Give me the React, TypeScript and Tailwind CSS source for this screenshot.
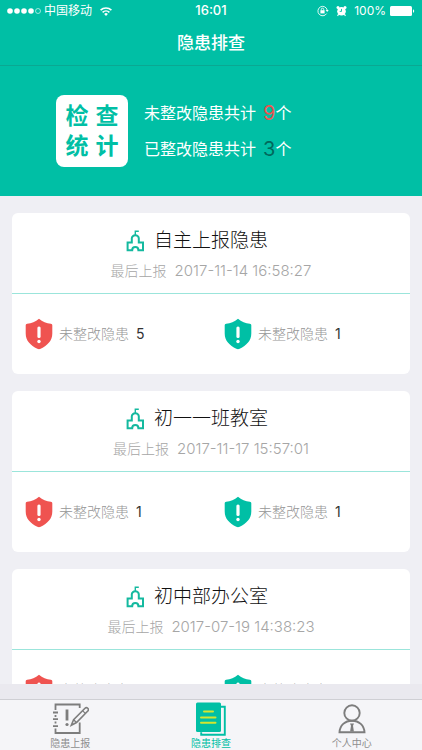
import { useState } from 'react';

interface Place {
  name: string;
  lastReport: string;
  pending: number;
  handled: number;
}

const places: Place[] = [
  { name: '自主上报隐患', lastReport: '2017-11-14 16:58:27', pending: 5, handled: 1 },
  { name: '初一一班教室', lastReport: '2017-11-17 15:57:01', pending: 1, handled: 1 },
  { name: '初中部办公室', lastReport: '2017-07-19 14:38:23', pending: 1, handled: 1 },
];

function StatusBar() {
  return (
    <div className="grid h-[22px] grid-cols-[1fr_auto_1fr] items-center px-[7px] text-xs">
      <div className="flex items-center">
        <svg width="35" height="8" viewBox="0 0 35 8" fill="#fff">
          <circle cx="3" cy="4" r="2.8" />
          <circle cx="10" cy="4" r="2.8" />
          <circle cx="17" cy="4" r="2.8" />
          <circle cx="24" cy="4" r="2.8" />
          <circle cx="31" cy="4" r="2.5" fill="none" stroke="#fff" strokeWidth="0.6" />
        </svg>
        <span className="ml-0.5">中国移动</span>
        <svg className="ml-2" width="12" height="9" viewBox="0 0 12 9" fill="none" stroke="#fff" strokeWidth="1.6">
          <path d="M0.6 3.2a7.8 7.8 0 0 1 10.8 0" />
          <path d="M2.6 5.4a4.9 4.9 0 0 1 6.8 0" />
          <path d="M6 9L4.1 7a2.8 2.8 0 0 1 3.8 0z" fill="#fff" stroke="none" />
        </svg>
      </div>
      <span className="text-[13px] font-medium">16:01</span>
      <div className="flex items-center justify-end">
        <svg width="12" height="12" viewBox="0 0 12 12" fill="none" stroke="#fff" strokeWidth="0.9">
          <path d="M9.6 8.6A4.7 4.7 0 1 1 10.2 5" />
          <path d="M8.7 5h3L10.2 7z" fill="#fff" stroke="none" />
          <rect x="3.4" y="5.2" width="4.2" height="3.2" fill="#fff" stroke="none" />
          <path d="M4.3 5.4V4.4a1.2 1.2 0 0 1 2.4 0v1" />
        </svg>
        <svg className="ml-[7px]" width="11" height="12" viewBox="0 0 11 12" fill="#fff">
          <circle cx="5.5" cy="6.2" r="4.3" />
          <circle cx="2" cy="2.5" r="1.5" />
          <circle cx="9" cy="2.5" r="1.5" />
          <path d="M2.6 9l-1 2M8.4 9l1 2" stroke="#fff" strokeWidth="1.1" />
          <path d="M5.5 3.9v2.5H3.7" fill="none" stroke="#00bfa5" strokeWidth="0.9" />
        </svg>
        <span className="ml-[7px]">100%</span>
        <svg className="ml-1" width="25" height="10" viewBox="0 0 25 10" fill="#fff">
          <rect x="0" y="0" width="22" height="10" rx="1.5" />
          <path d="M23 3.2c1.6.5 1.6 3.1 0 3.6z" />
        </svg>
      </div>
    </div>
  );
}

function SchoolIcon() {
  return (
    <svg width="19" height="22" viewBox="0 0 19 22" fill="none" stroke="#14b99f" strokeWidth="2">
      <path d="M9.3 5.5V1.2h3.5" strokeWidth="1.4" />
      <path d="M1.6 20.2v-7.7h4.2V8.2c0-1.400 1.500-3 3.500-3s3.500 1.600 3.500 3v4.300H17v7.700h-4.600c0-2-1.300-3.200-3.100-3.200s-3.100 1.200-3.100 3.200z" />
    </svg>
  );
}

function ShieldIcon({ color }: { color: string }) {
  return (
    <svg width="28" height="32" viewBox="0 0 28 32">
      <path
        d="M14 .8c3.4 2.9 7.6 4.6 11.8 4.9 1 .1 1.5.7 1.5 1.6v8.2c0 7.4-4.8 11.8-11.6 15.3-1.2.6-2.2.6-3.4 0C5.5 27.3.7 22.9.7 15.5V7.3c0-.9.5-1.5 1.5-1.6C6.4 5.4 10.6 3.7 14 .8z"
        fill={color}
      />
      <rect x="12.4" y="8.5" width="3.2" height="11.5" rx="1.5" fill="#fff" />
      <circle cx="14" cy="23.5" r="1.7" fill="#fff" />
    </svg>
  );
}

function Count({ color, value }: { color: string; value: number }) {
  return (
    <div className="flex items-center pl-[13px] text-sm">
      <ShieldIcon color={color} />
      <span className="ml-[6px] font-light text-[#969696]">未整改隐患</span>
      <span className="ml-[7px] text-[#333]">{value}</span>
    </div>
  );
}

function PlaceCard({ place }: { place: Place }) {
  return (
    <section className="shrink-0 rounded-md bg-white">
      <div className="flex h-[81px] flex-col items-center border-b border-[#9be5db] pt-[14px]">
        <div className="flex items-center gap-[9px] pr-7">
          <SchoolIcon />
          <h2 className="text-[19px] leading-7 font-light text-[#111]">{place.name}</h2>
        </div>
        <p className="mt-1.5 flex items-center gap-2 text-sm leading-5 font-light text-[#a6a6a6]">
          <span>最后上报</span>
          <time className="text-[15px]">{place.lastReport}</time>
        </p>
      </div>
      <div className="grid h-20 grid-cols-2">
        <Count color="#ef5350" value={place.pending} />
        <Count color="#00bfa5" value={place.handled} />
      </div>
    </section>
  );
}

function ReportIcon() {
  return (
    <svg width="38" height="34" viewBox="0 0 38 34" fill="none" stroke="#7d7d7d" strokeWidth="1.8">
      <path d="M4.5 8V2.5h24.2V6M4.5 13v2M4.5 19.500v2M4.500 26.500V31h24.200V20.500" />
      <path d="M2 10.500h5M2 17.200h5M2 24.200h5" />
      <path d="M16 7.500v11" strokeWidth="2.8" />
      <circle cx="16" cy="22.5" r="1.6" fill="#7d7d7d" stroke="none" />
      <path d="M20.3 23.2l2.300-5.500L34 6.300a1.900 1.900 0 0 1 2.800 2.700L25.500 20.500z" strokeWidth="1.6" />
      <path d="M31.5 8.600l2.800 2.800M22.600 17.700l2.900 2.800" strokeWidth="1.3" />
    </svg>
  );
}

function CheckIcon() {
  return (
    <svg width="38" height="34" viewBox="0 0 38 34" fill="none">
      <path d="M28.5 4.8h4.3v28H9.2v-2.5" stroke="#00bfa5" strokeWidth="1.9" />
      <rect x="4" y=".5" width="25" height="29.5" rx="1.5" fill="#00bfa5" />
      <path d="M12 9.5h9M9 15.5h14.5M9 20.7h14.5" stroke="#d3e52f" strokeWidth="2" strokeLinecap="round" />
    </svg>
  );
}

function UserIcon() {
  return (
    <svg width="38" height="34" viewBox="0 0 38 34" fill="none" stroke="#7d7d7d" strokeWidth="1.9">
      <circle cx="19" cy="11" r="7.7" />
      <path d="M6.5 30.2c.4-6.8 5.4-11.500 12.500-11.500s12.100 4.700 12.500 11.500z" />
      <path d="M17 21.5h4l-1 2.3.9 5.7h-3.800l.9-5.700z" fill="#7d7d7d" stroke="none" />
    </svg>
  );
}

const tabs = [
  { label: '隐患上报', Icon: ReportIcon },
  { label: '隐患排查', Icon: CheckIcon },
  { label: '个人中心', Icon: UserIcon },
];

export default function App() {
  const [active, setActive] = useState('隐患排查');

  return (
    <div className="flex h-screen flex-col bg-[#efeff4] font-['Inter','Noto_Sans_CJK_SC',sans-serif]">
      <header className="shrink-0 border-b border-[#0aa892] bg-[#00bfa5] text-white">
        <StatusBar />
        <h1 className="pb-px text-center text-[17px] leading-[42px] font-medium">隐患排查</h1>
      </header>

      <div className="flex shrink-0 items-center gap-4 bg-[#00bfa5] py-[29px] pl-14 text-white">
        <div className="grid size-[72px] grid-cols-2 place-content-center justify-items-center gap-y-0.5 rounded-lg bg-white px-[6px] text-[23px] leading-7 font-bold text-[#00bfa5]">
          <span>检</span>
          <span>查</span>
          <span>统</span>
          <span>计</span>
        </div>
        <div className="flex flex-col gap-2 text-base leading-7">
          <p className="flex items-center">
            未整改隐患共计<span className="ml-[7px] text-xl text-[#ef5350]">9</span>个
          </p>
          <p className="flex items-center">
            已整改隐患共计<span className="ml-[7px] text-xl text-[#00695c]">3</span>个
          </p>
        </div>
      </div>

      <main className="flex min-h-0 flex-1 flex-col gap-[17px] overflow-hidden px-3 pt-[17px]">
        {places.map((place) => (
          <PlaceCard key={place.name} place={place} />
        ))}
      </main>

      <div className="h-[15px] shrink-0 bg-[#eae9ef]" />
      <nav className="grid shrink-0 grid-cols-3 border-t border-[#cfcfd4] bg-[#f5f5f8]">
        {tabs.map(({ label, Icon }) => (
          <button
            key={label}
            type="button"
            onClick={() => setActive(label)}
            className={`flex flex-col items-center pt-0.5 text-[10px] leading-[14px] ${
              active === label ? 'text-[#00bfa5]' : 'text-[#8e8e8e]'
            }`}
          >
            <Icon />
            {label}
          </button>
        ))}
      </nav>
    </div>
  );
}
